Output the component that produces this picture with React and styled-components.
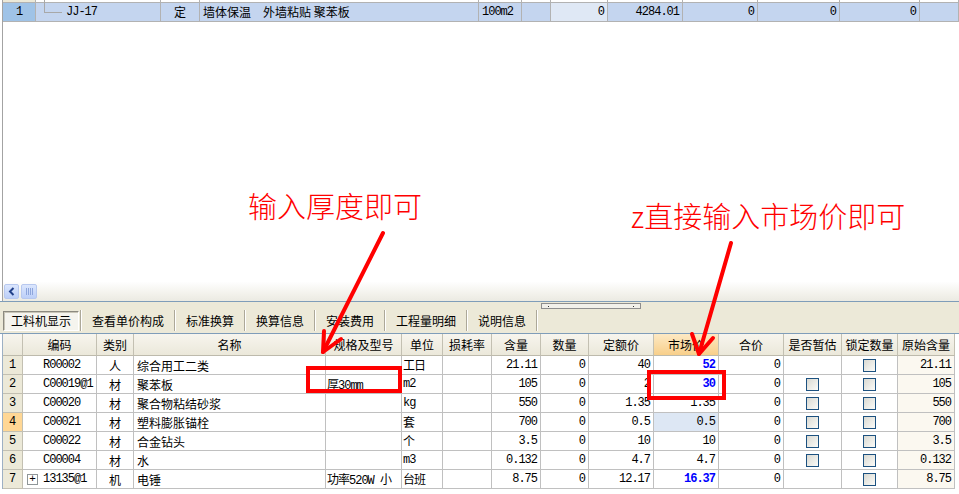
import React from 'react';
import styled, { createGlobalStyle } from 'styled-components';

const Global = createGlobalStyle`
  html, body { margin:0; padding:0; background:#fff; }
  body {
    font-family: "Liberation Mono", "Noto Sans CJK SC", monospace;
    font-size:12px;
    color:#000;
  }
`;

const Screen = styled.div`
  position:relative;
  width:959px;
  height:494px;
  overflow:hidden;
  background:#fff;
  display:flex;
  flex-direction:column;
`;

/* ---------- upper pane ---------- */
const TopPane = styled.div`
  height:301px;
  margin-left:2px;
  border-left:1px solid #a3a3a3;
  display:flex;
  flex-direction:column;
`;

const TopRow = styled.div`
  display:grid;
  grid-template-columns:33px 125px 39px 279px 43px 29px 57px 75px 75px 82px 80px 1fr;
  height:${p => p.$h}px;
  background:${p => p.$bg || '#fff'};
`;

const TopCell = styled.div`
  position:relative;
  box-sizing:border-box;
  border-right:1px solid #b2b2b2;
  border-bottom:1px solid #b2b2b2;
  background:${p => p.$bg || 'transparent'};
  text-align:${p => p.$align || 'left'};
  padding:0 ${p => p.$pr || 3}px 0 ${p => p.$pl || 3}px;
  line-height:18px;
  white-space:nowrap;
  font-family:${p => (p.$cjk ? '"Noto Sans CJK SC", sans-serif' : '"Liberation Mono", "Noto Sans CJK SC", monospace')};
  letter-spacing:${p => (p.$cjk ? '0' : '-1px')};
  ${p => p.$tree && `
    &::before{
      content:'';
      position:absolute;
      left:8px;
      top:-3px;
      width:17px;
      height:12px;
      border-left:1px solid #a8a8a8;
      border-bottom:1px solid #a8a8a8;
    }
  `}
`;

const Blank = styled.div`
  flex:1;
`;

const HScroll = styled.div`
  height:19px;
  display:flex;
  align-items:center;
  gap:2px;
  padding-left:1px;
  background:linear-gradient(#fefefe, #f3f2ec 60%, #ebeae2);
`;

const ScrollBtn = styled.div`
  box-sizing:border-box;
  width:${p => p.$w}px;
  height:15px;
  border:1px solid #b7c8ef;
  border-radius:2px;
  background:linear-gradient(#dbe6fd, #bccff8);
  display:flex;
  align-items:center;
  justify-content:center;
`;

/* ---------- tab strip ---------- */
const TabBar = styled.div`
  height:30px;
  border-top:1px solid #7f9db9;
  border-bottom:1px solid #7f9db9;
  background:#ece9d8;
  display:flex;
  align-items:flex-end;
  padding:0 0 1px 3px;
`;

const Tab = styled.div`
  box-sizing:border-box;
  height:20px;
  padding:0 ${p => (p.$active ? 7 : 10)}px;
  margin-bottom:1px;
  font-family:"Noto Sans CJK SC", sans-serif;
  font-size:12px;
  line-height:${p => (p.$active ? 18 : 20)}px;
  white-space:nowrap;
  ${p => p.$active && `
    border:1px solid;
    border-color:#8c8a80 #fff #fff #8c8a80;
    background:#f5f4ee;
    box-shadow:inset 1px 1px 0 #c9c6b8;
    margin-right:1px;
  `}
`;

const Sep = styled.div`
  width:0;
  height:21px;
  margin-bottom:1px;
  border-left:1px solid #aca899;
  border-right:1px solid #fff;
`;

const Grip = styled.div`
  align-self:flex-start;
  margin:1px 0 0 3px;
  box-sizing:border-box;
  width:100px;
  height:6px;
  border:1px solid #8e8e8e;
  background:#f1f0ea;
  display:flex;
  align-items:center;
  justify-content:space-between;
  padding:0 6px;
  & i{
    display:block;
    width:1px;
    height:1px;
    background:#333;
  }
`;

/* ---------- lower grid ---------- */
const COLS = '20px 74px 37px 192px 76px 41px 49px 49px 48px 65px 65px 65px 58px 56px 57px';

const Grid = styled.div`
  margin-left:2px;
  width:953px;
  box-sizing:border-box;
  border-left:1px solid #9db0c4;
`;

const GridRow = styled.div`
  display:grid;
  grid-template-columns:${COLS};
  height:${p => p.$h}px;
`;

const Head = styled.div`
  box-sizing:border-box;
  border-right:1px solid #c3c0b2;
  border-bottom:1px solid #bdbaac;
  background:${p => (p.$hot
    ? 'linear-gradient(#fde9c4, #f8cf8a)'
    : 'linear-gradient(#f7f5ee, #ebe8da)')};
  font-family:"Noto Sans CJK SC", sans-serif;
  font-size:12px;
  text-align:center;
  line-height:21px;
  white-space:nowrap;
  overflow:hidden;
`;

const RowHead = styled.div`
  box-sizing:border-box;
  border-right:1px solid #c3c0b2;
  border-bottom:1px solid #c3c0b2;
  background:${p => (p.$hot ? '#ffd795' : '#ece9d8')};
  text-align:center;
  line-height:18px;
`;

const Cell = styled.div`
  box-sizing:border-box;
  border-right:1px solid #c0c0c0;
  border-bottom:1px solid #c0c0c0;
  background:${p => p.$bg || '#fff'};
  display:flex;
  align-items:center;
  justify-content:${p => (p.$align === 'right' ? 'flex-end' : p.$align === 'center' ? 'center' : 'flex-start')};
  padding:0 ${p => p.$pr ?? 3}px 0 ${p => p.$pl ?? 3}px;
  white-space:nowrap;
  overflow:hidden;
  font-family:${p => (p.$cjk ? '"Noto Sans CJK SC", sans-serif' : '"Liberation Mono", "Noto Sans CJK SC", monospace')};
  letter-spacing:${p => (p.$cjk ? '0' : '-1px')};
  color:${p => (p.$blue ? '#0000ff' : '#000')};
  font-weight:${p => (p.$blue ? 700 : 400)};
`;

const Expand = styled.span`
  box-sizing:border-box;
  width:11px;
  height:11px;
  margin:0 5px 0 -16px;
  border:1px solid #8f9699;
  background:#fff;
  display:inline-flex;
  align-items:center;
  justify-content:center;
  font-size:11px;
  line-height:1;
  letter-spacing:0;
`;

const Check = styled.span`
  box-sizing:border-box;
  width:13px;
  height:13px;
  border:1px solid #1c5180;
  background:linear-gradient(135deg, #d9d9d2, #fbfbf8);
`;

/* ---------- annotations ---------- */
const Note = styled.div`
  position:absolute;
  left:${p => p.$x}px;
  top:${p => p.$y}px;
  font-family:"Noto Sans CJK SC", sans-serif;
  font-weight:300;
  font-size:29px;
  line-height:1;
  color:#ff0000;
  white-space:nowrap;
`;

const Marks = styled.svg`
  position:absolute;
  left:0;
  top:0;
  pointer-events:none;
`;

const heads = ['', '编码', '类别', '名称', '规格及型号', '单位', '损耗率', '含量', '数量', '定额价', '市场价', '合价', '是否暂估', '锁定数量', '原始含量'];

const rows = [
  { code: 'R00002', type: '人', name: '综合用工二类', spec: '', unit: '工日', qty: '21.11', price: '40', market: '52', blue: true, est: false, orig: '21.11' },
  { code: 'C00019@1', type: '材', name: '聚苯板', spec: '厚30mm', unit: 'm2', qty: '105', price: '2', market: '30', blue: true, est: true, orig: '105' },
  { code: 'C00020', type: '材', name: '聚合物粘结砂浆', spec: '', unit: 'kg', qty: '550', price: '1.35', market: '1.35', est: true, orig: '550' },
  { code: 'C00021', type: '材', name: '塑料膨胀锚栓', spec: '', unit: '套', qty: '700', price: '0.5', market: '0.5', est: true, orig: '700', hot: true },
  { code: 'C00022', type: '材', name: '合金钻头', spec: '', unit: '个', qty: '3.5', price: '10', market: '10', est: true, orig: '3.5' },
  { code: 'C00004', type: '材', name: '水', spec: '', unit: 'm3', qty: '0.132', price: '4.7', market: '4.7', est: true, orig: '0.132' },
  { code: '13135@1', type: '机', name: '电锤', spec: '功率520W 小', unit: '台班', qty: '8.75', price: '12.17', market: '16.37', blue: true, est: false, orig: '8.75', expand: true },
];

const tabs = ['工料机显示', '查看单价构成', '标准换算', '换算信息', '安装费用', '工程量明细', '说明信息'];

export default function App() {
  return (
    <Screen>
      <Global />
      <TopPane>
        <TopRow $h={3}>
          <TopCell $bg="#ece9d8" />
          <TopCell /><TopCell /><TopCell /><TopCell /><TopCell />
          <TopCell /><TopCell /><TopCell /><TopCell /><TopCell /><TopCell />
        </TopRow>
        <TopRow $h={19} $bg="#c4d5ef">
          <TopCell $bg="#9fc3e7" $align="center">1</TopCell>
          <TopCell $tree $pl={30}>JJ-17</TopCell>
          <TopCell $cjk $align="center">定</TopCell>
          <TopCell $cjk>墙体保温　外墙粘贴 聚苯板</TopCell>
          <TopCell>100m2</TopCell>
          <TopCell />
          <TopCell $bg="#dfe8f5" $align="right">0</TopCell>
          <TopCell $align="right">4284.01</TopCell>
          <TopCell $align="right">0</TopCell>
          <TopCell $align="right">0</TopCell>
          <TopCell $align="right">0</TopCell>
          <TopCell />
        </TopRow>
        <Blank />
        <HScroll>
          <ScrollBtn $w={15}>
            <svg width="7" height="9" viewBox="0 0 7 9">
              <path d="M5.5 1 L2 4.5 L5.5 8" fill="none" stroke="#22418a" strokeWidth="2" />
            </svg>
          </ScrollBtn>
          <ScrollBtn $w={16}>
            <svg width="7" height="7" viewBox="0 0 7 7">
              <path d="M0.5 0v7M2.5 0v7M4.5 0v7M6.5 0v7" stroke="#8ea6dc" strokeWidth="1" />
            </svg>
          </ScrollBtn>
        </HScroll>
      </TopPane>

      <TabBar>
        {tabs.map((t, i) => (
          <React.Fragment key={t}>
            <Tab $active={i === 0}>{t}</Tab>
            <Sep />
          </React.Fragment>
        ))}
        <Grip><i /><i /></Grip>
      </TabBar>

      <Grid>
        <GridRow $h={22}>
          {heads.map((h, i) => (
            <Head key={i} $hot={h === '市场价'}>{h}</Head>
          ))}
        </GridRow>
        {rows.map((r, i) => (
          <GridRow key={r.code} $h={19}>
            <RowHead $hot={r.hot}>{i + 1}</RowHead>
            <Cell $pl={20}>
              {r.expand && <Expand>+</Expand>}
              {r.code}
            </Cell>
            <Cell $cjk $align="center">{r.type}</Cell>
            <Cell $cjk>{r.name}</Cell>
            <Cell $pl={1}>{r.spec}</Cell>
            <Cell $pl={1}>{r.unit}</Cell>
            <Cell />
            <Cell $align="right">{r.qty}</Cell>
            <Cell $align="right">0</Cell>
            <Cell $align="right">{r.price}</Cell>
            <Cell $align="right" $blue={r.blue} $bg={r.hot ? '#dde7f4' : undefined}>{r.market}</Cell>
            <Cell $align="right">0</Cell>
            <Cell $align="center">{r.est && <Check />}</Cell>
            <Cell $align="center"><Check /></Cell>
            <Cell $align="right" $bg="#fbf8f0">{r.orig}</Cell>
          </GridRow>
        ))}
      </Grid>

      <Note $x={248} $y={191}>输入厚度即可</Note>
      <Note $x={631} $y={201}>z直接输入市场价即可</Note>

      <Marks width="959" height="494" viewBox="0 0 959 494">
        <g fill="none" stroke="#ff0000" strokeWidth="4">
          <rect x="308" y="368" width="92" height="23" />
          <rect x="649" y="372" width="75" height="26" />
        </g>
        <g fill="none" stroke="#ff0000" strokeWidth="4" strokeLinecap="round" strokeLinejoin="round">
          <line x1="383" y1="233" x2="323" y2="352" />
          <polyline points="324,331 323,352 341,339" />
          <line x1="731" y1="243" x2="699" y2="354" />
          <polyline points="692,334 699,354 713,338" />
        </g>
      </Marks>
    </Screen>
  );
}
